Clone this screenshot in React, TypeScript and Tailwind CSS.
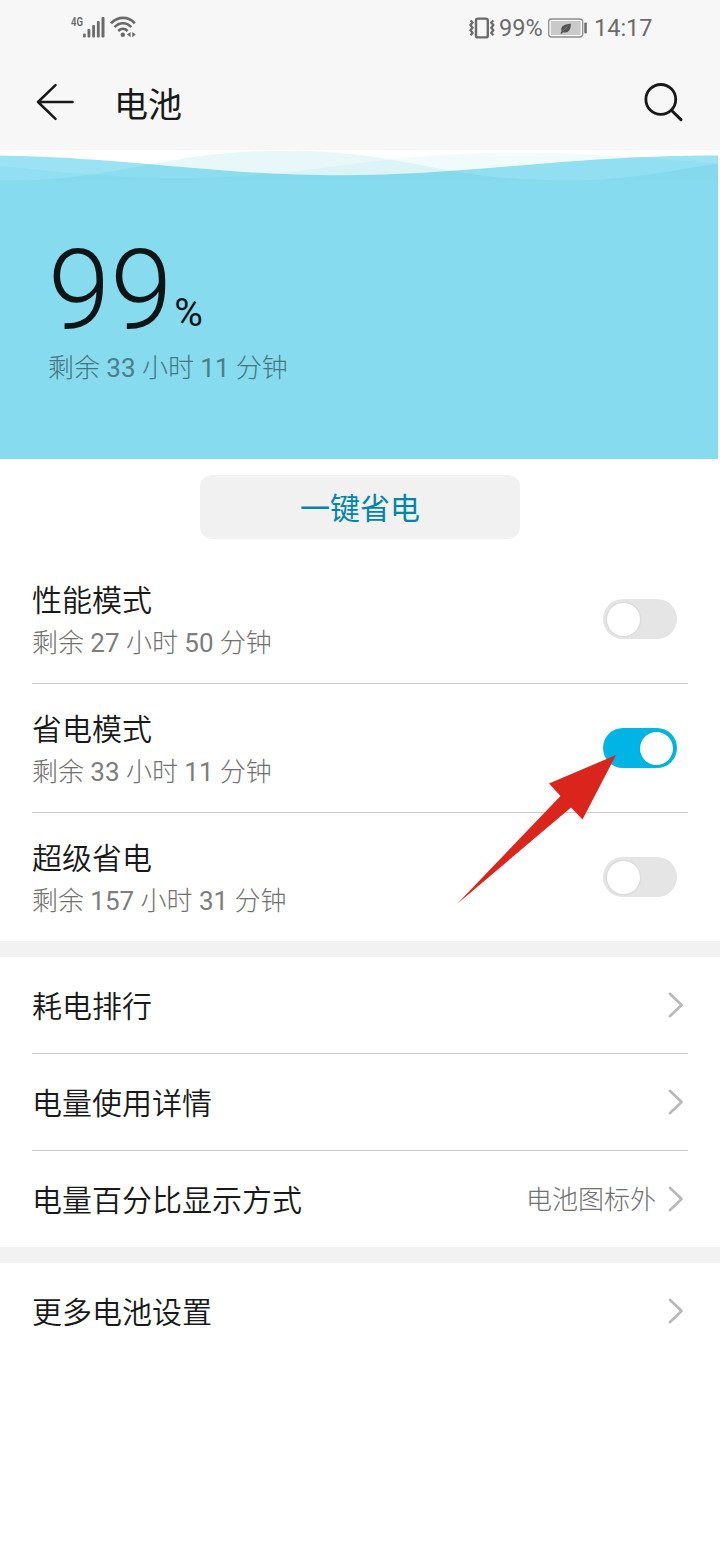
import { useState } from 'react'
import { clsx } from 'clsx'

const initialModes = [
  { title: '性能模式', hours: '27', minutes: '50', on: false },
  { title: '省电模式', hours: '33', minutes: '11', on: true },
  { title: '超级省电', hours: '157', minutes: '31', on: false },
]

const links = [
  { title: '耗电排行', value: '' },
  { title: '电量使用详情', value: '' },
  { title: '电量百分比显示方式', value: '电池图标外' },
]

function Remaining({ hours, minutes }: { hours: string; minutes: string }) {
  return (
    <>
      剩余 <span className="font-normal opacity-90">{hours}</span> 小时{' '}
      <span className="font-normal opacity-90">{minutes}</span> 分钟
    </>
  )
}

function StatusBar() {
  return (
    <div className="flex h-14 items-center justify-between pr-[68px] pl-[70px] text-[#6b6b6b]">
      <svg width="68" height="28" viewBox="70 14 68 28" fill="currentColor">
        <text x="71" y="26" fontSize="12" fontWeight="600" fontFamily="Roboto" textLength="12" lengthAdjust="spacingAndGlyphs">4G</text>
        <rect x="83" y="33.5" width="2.8" height="4" rx="1" />
        <rect x="87.5" y="29" width="2.8" height="8.5" rx="1" />
        <rect x="92.2" y="25" width="2.8" height="12.5" rx="1" />
        <rect x="96.9" y="21" width="2.8" height="16.5" rx="1" />
        <rect x="101.5" y="17" width="3" height="20.5" rx="1" />
        <g fill="none" stroke="currentColor" strokeWidth="2.6">
          <path d="M111 23.3C118 16 128.500 16 134.800 23.300" />
          <path d="M114.500 27.200C119.500 22 126.500 22 131.300 27.200" />
          <path d="M118.200 31C121 28.200 124.800 28.200 127.700 31" />
        </g>
        <circle cx="122.800" cy="34.700" r="2.200" />
        <path d="M130.600 32v5.200l-3.600-2.600zM132.200 32v5.200l3.600-2.600z" />
      </svg>
      <div className="flex items-center">
        <svg width="28" height="24" viewBox="468 15 28 24" fill="none" stroke="currentColor">
          <rect x="476" y="17.600" width="11.800" height="18.800" rx="2" strokeWidth="2.400" />
          <path d="M470.500 19.500l2 2-2 2.600 2 2.600-2 2.600 2 2.600-2 2.400M493.300 19.500l-2 2 2 2.600-2 2.600 2 2.600-2 2.600 2 2.400" strokeWidth="2.300" />
        </svg>
        <span className="mt-px ml-[3px] w-[43px] text-[23.5px] leading-none">99%</span>
        <svg className="ml-[5px]" width="40" height="20" viewBox="547 17 40 20">
          <rect x="548.700" y="18" width="34" height="18" rx="2.800" fill="#f7f7f7" stroke="#8e8e8e" strokeWidth="1.300" />
          <rect x="550.800" y="20.100" width="29.800" height="13.800" rx="1" fill="#c9c9c9" />
          <rect x="584.300" y="21.500" width="2.500" height="11" rx="1" fill="#6b6b6b" />
          <path d="M560.300 32.200l1.300-1.900c-1.500-4 1.500-7.300 9.300-7.500 0 6.500-3.200 9.900-7.900 8.400l-1.300 1.500z" fill="#555" />
          <path d="M563 29.800l4.500-4" stroke="#aaa" strokeWidth=".5" />
        </svg>
        <span className="mt-px ml-[7px] w-[58px] text-[23.5px] leading-none">14:17</span>
      </div>
    </div>
  )
}

function Header() {
  return (
    <header className="flex h-[94px] items-center pr-[36px] pb-[2px] pl-[36px] text-[#191919]">
      <svg width="40" height="40" viewBox="36 82 40 40" fill="none" stroke="currentColor" strokeWidth="2.500" strokeLinecap="round" strokeLinejoin="round">
        <path d="M72.500 102H38M55.500 85.200L38 102L55.500 118.800" />
      </svg>
      <h1 className="mt-[5px] ml-[38px] flex-1 text-[34px] leading-none font-normal">电池</h1>
      <svg width="40" height="40" viewBox="644 82 40 40" fill="none" stroke="currentColor" strokeWidth="2.800" strokeLinecap="round">
        <circle cx="660.800" cy="99.400" r="14.900" />
        <path d="M671.600 110.500L681 119.600" strokeWidth="3" />
      </svg>
    </header>
  )
}

function BatteryLevel() {
  return (
    <section className="w-[718px] bg-[#87dbee]">
      <svg className="block" width="718" height="32" viewBox="0 150 718 32">
        <rect y="150" width="718" height="32" fill="#fff" />
        <path d="M0 155.500C130 157.500 215 175.300 342 175.300S570 155.300 718 155.500V182H0z" fill="#9ae2f4" />
        <path d="M0 180.500C120 182 160 150.700 285 150.700S435 180.300 565 180.300C630 180.300 670 171 718 163.500V182H0z" fill="#00afbe" fillOpacity=".09" />
        <path d="M0 166C60 172 110 178 180 178C310 178 370 152.700 515 152.700C600 152.700 650 158 718 164V182H0z" fill="#00afbe" fillOpacity=".05" />
        <path d="M0 180.800H718V182H0z" fill="#87dbee" />
      </svg>
      <div className="h-[277px] pt-[59px] pl-12">
        <div className="flex h-[98px] items-baseline text-[#0d1517]">
          <span className="text-[112px] leading-[98px] font-light">99</span>
          <span className="relative -top-[2px] ml-[2px] text-[39px] leading-none">%</span>
        </div>
        <p className="mt-[10px] text-[26px] leading-[38px] font-light text-[#457580]">
          <Remaining hours="33" minutes="11" />
        </p>
      </div>
    </section>
  )
}

function Toggle({ on, onClick }: { on: boolean; onClick: () => void }) {
  return (
    <button
      role="switch"
      aria-checked={on}
      onClick={onClick}
      className={clsx(
        'mr-[11px] flex h-10 w-[74px] items-center rounded-full px-[4px]',
        on ? 'justify-end bg-[#00b5e5]' : 'bg-[#e5e5e5]'
      )}
    >
      <span className="size-[33px] rounded-full bg-white shadow-[0_0_2px_1px_rgba(0,0,0,0.06)]" />
    </button>
  )
}

function Chevron() {
  return (
    <svg className="mr-[3px] ml-[11px]" width="18" height="28" viewBox="0 0 18 28" fill="none" stroke="#b8b8b8" strokeWidth="2.600" strokeLinecap="round" strokeLinejoin="round">
      <path d="M2.800 2.800L14.600 14L2.800 25.200" />
    </svg>
  )
}

function LinkRow({ title, value = '', last = false }: { title: string; value?: string; last?: boolean }) {
  return (
    <div className={clsx('mx-8 flex items-center border-[#c8c8c8]', last ? 'h-24' : 'h-[97px] border-b')}>
      <span className="flex-1 pt-1 text-[30px] leading-10 font-[350] text-[#191919]">{title}</span>
      {value && <span className="pt-[2px] text-[26px] leading-10 font-light text-[#707070]">{value}</span>}
      <Chevron />
    </div>
  )
}

export default function App() {
  const [modes, setModes] = useState(initialModes)

  const toggle = (idx: number) => {
    setModes(modes.map((m, i) => (i === idx ? { ...m, on: !m.on } : m)))
  }

  return (
    <div className="relative h-[1560px] w-[720px] overflow-hidden bg-white font-[Roboto,'Noto_Sans_CJK_SC',sans-serif]">
      <div className="h-[150px] bg-[#f7f7f7]">
        <StatusBar />
        <Header />
      </div>
      <BatteryLevel />

      <div className="flex justify-center pt-4 pb-4">
        <button className="h-16 w-80 rounded-xl bg-[#f1f1f1] pt-1 text-[30px] leading-none text-[#0285a8]">一键省电</button>
      </div>

      {modes.map((mode, i) => (
        <div
          key={mode.title}
          className={clsx('mx-8 flex items-center justify-between border-[#c8c8c8]', i < 2 ? 'h-[129px] border-b' : 'h-32')}
        >
          <div className="pt-[3px]">
            <h2 className="text-[30px] leading-[44px] font-[350] text-[#191919]">{mode.title}</h2>
            <p className="text-[26px] leading-10 font-light text-[#707070]">
              <Remaining hours={mode.hours} minutes={mode.minutes} />
            </p>
          </div>
          <Toggle on={mode.on} onClick={() => toggle(i)} />
        </div>
      ))}

      <div className="h-4 bg-[#f2f2f2]" />
      {links.map((link, i) => (
        <LinkRow key={link.title} title={link.title} value={link.value} last={i === links.length - 1} />
      ))}
      <div className="h-4 bg-[#f2f2f2]" />
      <LinkRow title="更多电池设置" last />

      {/* pointer to the enabled mode */}
      <svg className="pointer-events-none absolute top-[754px] left-[456px]" width="162" height="152" viewBox="456 754 162 152">
        <path d="M616 755L549 783.500L560.500 796L457 904L571 807.500L582.500 819.500Z" fill="#da251d" />
      </svg>
    </div>
  )
}
